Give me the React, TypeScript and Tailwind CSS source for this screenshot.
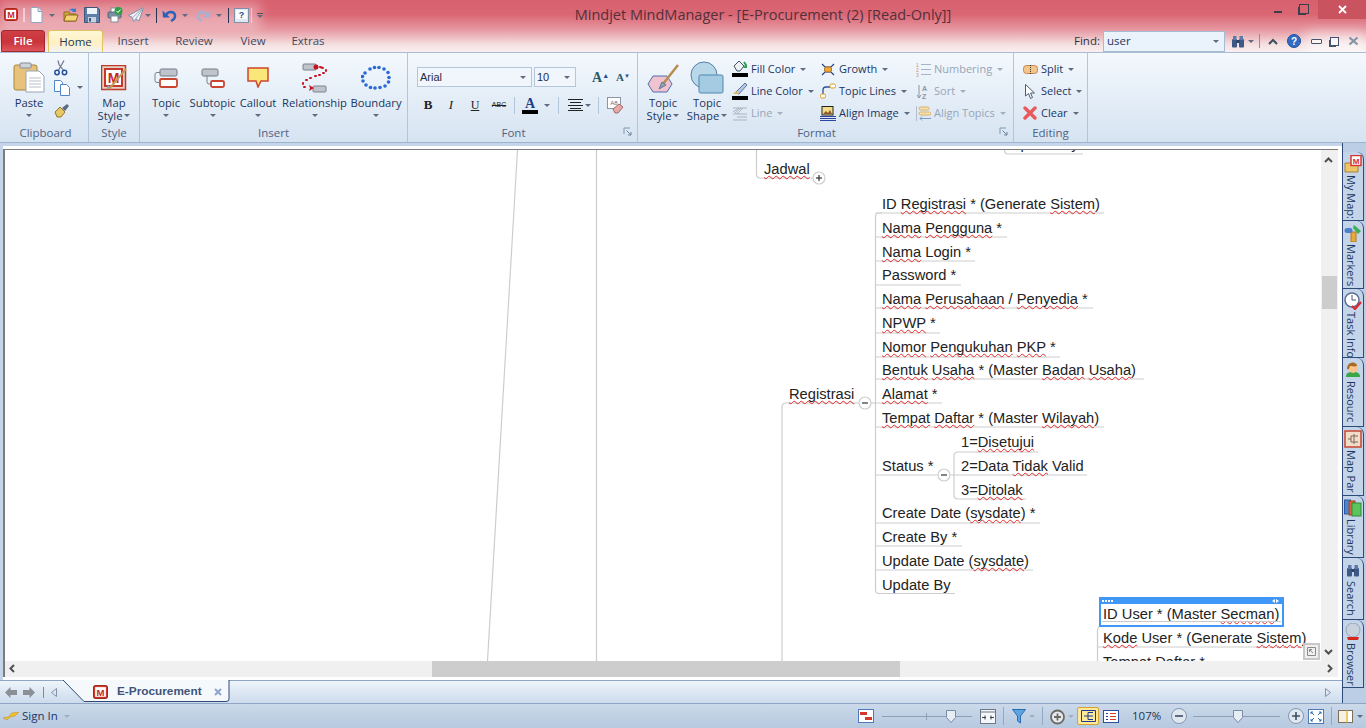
import React from 'react';

const Caret = ({ light = false, cls = '' }: { light?: boolean; cls?: string }) => (
  <span className={`inline-block h-0 w-0 shrink-0 border-x-[3px] border-t-[3px] border-x-transparent ${light ? 'border-t-[#a3afc0]' : 'border-t-[#5d6b80]'} ${cls}`} />
);

const Launcher = ({ cls }: { cls: string }) => (
  <svg width="9" height="9" viewBox="0 0 9 9" className={`absolute ${cls}`}>
    <path d="M1 1h6M1 1v6" stroke="#8496ad" fill="none" />
    <path d="M3.5 3.500L8 8M8 5v3H5" stroke="#71839b" fill="none" />
  </svg>
);

/* ---- small app icons ---- */
const MLogo = ({ size = 14 }: { size?: number }) => (
  <svg width={size} height={size} viewBox="0 0 14 14">
    <rect x="0.500" y="0.500" width="13" height="12" rx="2" fill="#d8382c" stroke="#9e2a20" />
    <rect x="2" y="2" width="10" height="9" fill="#fff" />
    <text x="7" y="10" textAnchor="middle" fontSize="9" fontWeight="700" fontFamily="Liberation Sans" fill="#c8281e">M</text>
  </svg>
);
const NewDoc = () => (
  <svg width="13" height="16" viewBox="0 0 13 16"><path d="M1 .5h7l4 4v11H1z" fill="#fff" stroke="#8ea5c4" /><path d="M8 .5v4h4" fill="#dbe6f3" stroke="#8ea5c4" /></svg>
);
const OpenIcon = () => (
  <svg width="16" height="16" viewBox="0 0 16 16"><path d="M1 5h5l1 2h6v7H1z" fill="#d6a93f" stroke="#8c6a1f" /><path d="M1 14l2-6h12l-2 6z" fill="#f2d477" stroke="#8c6a1f" /><path d="M6 4c1-3 4-3 6-2l1-1v4h-4l1-1c-1-1-3-1-4 0z" fill="#2f7fd6" /></svg>
);
const SaveIcon = () => (
  <svg width="16" height="16" viewBox="0 0 16 16"><path d="M.5.500h13l2 2v13H.5z" fill="#5d7ea6" stroke="#3d5678" /><rect x="3" y="1" width="10" height="6" fill="#eef3f9" /><rect x="4" y="10" width="8" height="5.500" fill="#c6d2e0" /><rect x="5" y="11" width="2" height="3.500" fill="#3d5678" /></svg>
);
const PrintIcon = () => (
  <svg width="16" height="16" viewBox="0 0 16 16"><rect x="4" y="1" width="7" height="5" fill="#fff" stroke="#7e8b9c" /><rect x="1" y="5" width="13" height="6" rx="1" fill="#7d8ea4" stroke="#566477" /><rect x="4" y="9" width="7" height="6" fill="#fff" stroke="#7e8b9c" /><circle cx="11.500" cy="4" r="4" fill="#2f9e44" /><path d="M9.500 4l1.500 1.500 2.500-3" stroke="#fff" fill="none" /></svg>
);
const SendIcon = () => (
  <svg width="16" height="16" viewBox="0 0 16 16"><path d="M15.500.500L.5 8.500l4 2 1 4.500 2.500-3 3 2z" fill="#eef2f7" stroke="#7f8fa5" /><path d="M15.500.500L4.500 10.500M15.500.500L5.500 15" stroke="#9aa8ba" fill="none" /></svg>
);
const UndoIcon = ({ faded = false }: { faded?: boolean }) => (
  <svg width="15" height="13" viewBox="0 0 15 13" style={{ transform: faded ? 'scaleX(-1)' : undefined }}><path d="M4 6c2-4 8-4 9 0 .5 3-2 5-4 6" stroke={faded ? '#a5b2d2' : '#2a62b8'} strokeWidth="2.400" fill="none" /><path d="M0.500 1.500l.5 7h7z" fill={faded ? '#a5b2d2' : '#2a62b8'} /></svg>
);
const HelpBook = () => (
  <svg width="15" height="15" viewBox="0 0 15 15"><rect x=".5" y=".5" width="14" height="14" fill="#dfe7f1" stroke="#7f90a8" /><rect x="2" y="2" width="11" height="9" fill="#f8fafc" /><text x="7.500" y="10" textAnchor="middle" fontSize="9" fontWeight="700" fontFamily="Liberation Sans" fill="#2c4f88">?</text></svg>
);
const Binoculars = ({ dark = true }: { dark?: boolean }) => (
  <svg width="14" height="13" viewBox="0 0 14 13"><rect x="1" y="4" width="5" height="8.500" rx="1" fill={dark ? '#3d5a86' : '#4a5f80'} /><rect x="8" y="4" width="5" height="8.500" rx="1" fill={dark ? '#3d5a86' : '#4a5f80'} /><rect x="2" y="1" width="3.500" height="4" fill="#5d7aa6" /><rect x="8.500" y="1" width="3.500" height="4" fill="#5d7aa6" /><rect x="5.500" y="5" width="3" height="3" fill="#2c4468" /></svg>
);
const PasteIcon = () => (
  <svg width="32" height="31" viewBox="0 0 32 31"><rect x="1" y="3" width="23" height="25" rx="2" fill="#e6c27a" stroke="#a8843f" /><rect x="7" y="1" width="11" height="5" rx="1" fill="#cfd4da" stroke="#838a94" /><path d="M13 9h13l5 5v16H13z" fill="#fff" stroke="#9aa4b2" /><path d="M16 16h12M16 19h12M16 22h12M16 25h12" stroke="#b8bfca" /></svg>
);
const ScissorsIcon = () => (
  <svg width="14" height="16" viewBox="0 0 14 16"><path d="M10 .5L4 11M4 .5l1 4 5 6.500" stroke="#6b7788" strokeWidth="1.200" fill="none" /><circle cx="3" cy="12.500" r="2.200" fill="none" stroke="#254f9e" strokeWidth="1.500" /><circle cx="10.500" cy="12.500" r="2.200" fill="none" stroke="#254f9e" strokeWidth="1.500" /></svg>
);
const CopyIcon = () => (
  <svg width="17" height="16" viewBox="0 0 17 16"><path d="M.5.500h6l2 2v9h-8z" fill="#fff" stroke="#5286cc" /><path d="M6.500 4.500h6l3 3v8h-9z" fill="#fff" stroke="#5286cc" /></svg>
);
const BrushIcon = () => (
  <svg width="16" height="15" viewBox="0 0 16 15"><path d="M1 9l5-5 5 5-4 5H3z" fill="#e8c766" stroke="#94762c" /><path d="M8 5l5-4 2 2-4 5z" fill="#5d6b80" /></svg>
);
const MapStyleIcon = () => (
  <svg width="26" height="26" viewBox="0 0 26 26"><rect x=".5" y=".5" width="24" height="24" fill="#e3d4c7" stroke="#c0392b" strokeWidth="1.500" /><rect x="3" y="3" width="19" height="19" fill="#c8372b" /><rect x="5" y="5" width="15" height="15" fill="#fff" /><text x="12.500" y="17.500" textAnchor="middle" fontSize="14" fontWeight="700" fontFamily="Liberation Sans" fill="#c8281e">M</text><path d="M8 24L25 4" stroke="#c09a57" strokeWidth="2" /><path d="M5 25l4-3-2-2z" fill="#8fa3bc" /></svg>
);
const TopicIcon = () => (
  <svg width="24" height="20" viewBox="0 0 24 20"><rect x="6" y="1" width="17" height="7" rx="1.500" fill="#bfc4cc" stroke="#707883" /><rect x="6" y="11" width="17" height="8" rx="1.500" fill="#fff" stroke="#c8452f" strokeWidth="1.800" /><path d="M6 4.500H3Q1 4.500 1 6.500v6q0 2 2 2h3" stroke="#7a818b" fill="none" /></svg>
);
const SubtopicIcon = () => (
  <svg width="24" height="20" viewBox="0 0 24 20"><rect x="1" y="1" width="16" height="7" rx="1.500" fill="#bfc4cc" stroke="#707883" /><rect x="10" y="13" width="13" height="6" rx="1.500" fill="#fff" stroke="#c8452f" strokeWidth="1.800" /><path d="M6 8v6q0 2 2 2h2" stroke="#7a818b" fill="none" /></svg>
);
const CalloutIcon = () => (
  <svg width="22" height="21" viewBox="0 0 22 21"><path d="M1 1h20v13h-7l-3 6-2-6H1z" fill="#fbe67a" stroke="#d0452d" strokeWidth="1.500" /></svg>
);
const RelationshipIcon = () => (
  <svg width="26" height="30" viewBox="0 0 26 30">
    <rect x="1" y="1" width="13" height="6" rx="1" fill="#bfc4cc" stroke="#7a818b" /><rect x="11" y="23" width="13" height="6" rx="1" fill="#bfc4cc" stroke="#7a818b" />
    <circle cx="14" cy="4" r="2.500" fill="#c8141e" />
    <path d="M18 4l3 1M24 7v1M21 10h1M17 12h1M13 13h1M8 15h1M4 17h1M1 20v1M2 24h1" stroke="#c8141e" strokeWidth="2" strokeLinecap="round" />
    <path d="M7 22l5 3-5 3 1-3z" fill="#c8141e" />
  </svg>
);
const BoundaryIcon = () => (
  <svg width="30" height="26" viewBox="0 0 30 26" fill="#2a68d6">
    {[[4,8],[1.500,11.500],[2,16],[5,20],[9.500,22.500],[14,23],[19,22.500],[24,21],[27.500,17],[28,12.500],[27,7.500],[23,4],[18,2.500],[13.500,2.500],[9,4]].map(([x, y], i) => (
      <circle key={i} cx={x} cy={y} r="1.800" />
    ))}
  </svg>
);
const ClearFmtIcon = () => (
  <svg width="17" height="17" viewBox="0 0 17 17"><rect x=".5" y=".5" width="13" height="11" fill="#fff" stroke="#8a95a5" /><text x="7" y="8" textAnchor="middle" fontSize="6" fontFamily="Liberation Sans" fill="#5a6b85">A8</text><path d="M6 12l6-5 4 3-5 6H8z" fill="#e8a9a9" stroke="#a16a6a" /></svg>
);
const TopicStyleIcon = () => (
  <svg width="32" height="30" viewBox="0 0 32 30"><path d="M1 21l5-8h14l5 8-5 8H6z" fill="#efc3cf" stroke="#4f6fb0" /><path d="M16 21L31 2" stroke="#b98d4e" strokeWidth="2.500" /><path d="M12 26l3-7 4 3z" fill="#8ea3bd" stroke="#66778f" /></svg>
);
const TopicShapeIcon = () => (
  <svg width="34" height="33" viewBox="0 0 34 33"><circle cx="14" cy="14" r="13" fill="#b8d7e8" stroke="#5a7ea8" /><rect x="9" y="14" width="24" height="18" rx="1.500" fill="#a5cbe2" stroke="#4f86b0" /></svg>
);
const FillColorIcon = () => (
  <svg width="16" height="18" viewBox="0 0 16 18"><path d="M2 6l5-5 5 5-4 5H5z" fill="#eef2f7" stroke="#3f4d60" /><path d="M12 2l2 3-1 2h2" stroke="#2aa052" strokeWidth="2" fill="none" /><rect x="0" y="13" width="16" height="4" fill="#000" /></svg>
);
const LineColorIcon = () => (
  <svg width="16" height="18" viewBox="0 0 16 18"><path d="M3 11L13 1l2 2-8 9z" fill="#b9c8dc" stroke="#5577a8" /><path d="M1 12l3-3 3 3z" fill="#e3b95e" /><rect x="0" y="14" width="16" height="4" fill="#000" /></svg>
);
const LineIcon = () => (
  <svg width="16" height="15" viewBox="0 0 16 15" stroke="#a8b3c2" fill="none"><path d="M1 2h14M1 6l6-4M3 7l6-5M5 8l6-6M1 8h14M5 11h10M1 14h14" /></svg>
);
const GrowthIcon = () => (
  <svg width="14" height="13" viewBox="0 0 14 13"><path d="M1 1l3 3h6l3-3M1 12l3-3h6l3 3" stroke="#26408a" fill="none" strokeWidth="1.200" /><rect x="3.500" y="4" width="7" height="5" rx="2" fill="#f0a93c" stroke="#b07016" /></svg>
);
const TopicLinesIcon = () => (
  <svg width="16" height="16" viewBox="0 0 16 16"><path d="M3 12V7q0-3 3-3h4" stroke="#2b4f9a" fill="none" strokeWidth="1.300" /><rect x="10" y="1" width="5.500" height="4" rx="1.500" fill="#fff" stroke="#e39a1e" /><rect x="0.500" y="11" width="5" height="4" rx="1.500" fill="#fff" stroke="#e39a1e" /></svg>
);
const AlignImageIcon = () => (
  <svg width="16" height="15" viewBox="0 0 16 15"><rect x="2" y="0.500" width="11" height="8.500" fill="#f4dc8a" stroke="#222" /><path d="M3 8l3-3 2 2 2-3 2 4z" fill="#8c5a26" /><path d="M0 10.500h16M0 12.500h16M0 14.500h16" stroke="#2a45a0" /></svg>
);
const NumberingIcon = () => (
  <svg width="15" height="15" viewBox="0 0 15 15"><text x="0" y="5" fontSize="5" fontFamily="Liberation Sans" fill="#c8926a">1</text><text x="0" y="10" fontSize="5" fontFamily="Liberation Sans" fill="#c8926a">2</text><text x="0" y="15" fontSize="5" fontFamily="Liberation Sans" fill="#c8926a">3</text><path d="M5 2.500h10M5 7.500h10M5 12.500h10" stroke="#a5b4c8" strokeWidth="1.200" /></svg>
);
const SortIcon = () => (
  <svg width="15" height="15" viewBox="0 0 15 15"><path d="M3 1v13M1 11l2 3 2-3" stroke="#8c96a3" fill="none" /><text x="6" y="7" fontSize="7" fontWeight="700" fontFamily="Liberation Sans" fill="#8c96a3">A</text><text x="6" y="14.500" fontSize="7" fontWeight="700" fontFamily="Liberation Sans" fill="#8c96a3">Z</text></svg>
);
const AlignTopicsIcon = () => (
  <svg width="15" height="15" viewBox="0 0 15 15"><path d="M.5 0v15" stroke="#b2bccb" /><rect x="3" y="1" width="10" height="3" rx="1.500" fill="#f4e0b0" stroke="#d8b26c" /><rect x="3" y="6" width="12" height="3" rx="1.500" fill="#f4e0b0" stroke="#d8b26c" /><path d="M4 12.500h11M4 12.500l2-2M4 12.500l2 2" stroke="#7d97c9" fill="none" /></svg>
);
const SplitIcon = () => (
  <svg width="15" height="9" viewBox="0 0 15 9"><rect x=".5" y=".5" width="14" height="8" rx="3" fill="#f4c58a" stroke="#c8864a" /><path d="M7.500 0v9" stroke="#333" strokeDasharray="1 1" /></svg>
);
const SelectIcon = () => (
  <svg width="11" height="15" viewBox="0 0 11 15"><path d="M.5.500v11.500l3-2.500 2 5 2-1-2-4.500h4z" fill="#fff" stroke="#4c5b70" /></svg>
);
const ClearIcon = () => (
  <svg width="14" height="14" viewBox="0 0 14 14"><path d="M2 2l10 10M12 2L2 12" stroke="#ea5a5a" strokeWidth="3.400" strokeLinecap="round" /></svg>
);

/* ---- ribbon parts ---- */
const Group = ({ label, cls, bodyCls = '', labelCls = '', children, launcher }: { label: string; cls: string; bodyCls?: string; labelCls?: string; children: React.ReactNode; launcher?: boolean }) => (
  <div className={`relative flex h-full shrink-0 flex-col border-r border-[#b3c5db] ${cls}`}>
    <div className={`flex min-h-0 flex-1 ${bodyCls}`}>{children}</div>
    <div className={`h-[18px] text-center text-[11.500px] leading-[18px] text-[#4f6482] ${labelCls}`}>{label}</div>
    {launcher && <Launcher cls="bottom-[6px] right-[5px]" />}
  </div>
);

const BigButton = ({ icon, lines, cls }: { icon: React.ReactNode; lines: string[]; cls: string }) => (
  <div className={`flex shrink-0 flex-col items-center pt-[8px] ${cls}`}>
    <div className="flex h-[33px] items-center justify-center">{icon}</div>
    <div className="mt-[2px] whitespace-nowrap text-center text-[11.250px] leading-[13px] text-[#1c3560]">{lines[0]}</div>
    {lines[1] ? (
      <div className="flex items-center gap-[2px] whitespace-nowrap text-[11.250px] leading-[13px] text-[#1c3560]">
        {lines[1]}
        <Caret />
      </div>
    ) : (
      <div className="flex h-[13px] items-center">
        <Caret />
      </div>
    )}
  </div>
);

const SmallButton = ({ icon, text, off = false }: { icon: React.ReactNode; text: string; off?: boolean }) => (
  <div className="flex h-[22px] items-center">
    <div className="flex w-[16px] shrink-0 items-center justify-center">{icon}</div>
    <span className={`ml-[3px] whitespace-nowrap text-[11px] ${off ? 'text-[#97a5b8]' : 'text-[#1c3560]'}`}>{text}</span>
    <Caret light={off} cls="ml-[5px]" />
  </div>
);

const Ribbon = () => (
  <div className="flex h-[90px] shrink-0 border-b border-[#9fb4cf] bg-[linear-gradient(180deg,#f3f8fd_0%,#e6eff8_45%,#d6e3f1_100%)]">
    <Group label="Clipboard" cls="w-[89px]" labelCls="pl-[3px]">
      <BigButton cls="ml-[4px] w-[50px]" icon={<PasteIcon />} lines={['Paste']} />
      <div className="flex flex-col">
        <div className="flex h-[23px] items-end"><ScissorsIcon /></div>
        <div className="flex h-[23px] items-center"><CopyIcon /><Caret cls="ml-[6px]" /></div>
        <div className="flex h-[22px] items-center"><BrushIcon /></div>
      </div>
    </Group>
    <Group label="Style" cls="w-[51px]">
      <BigButton cls="w-full" icon={<MapStyleIcon />} lines={['Map', 'Style']} />
    </Group>
    <Group label="Insert" cls="w-[268px]" bodyCls="pl-[3px]">
      <BigButton cls="w-[46px]" icon={<TopicIcon />} lines={['Topic']} />
      <BigButton cls="w-[47px]" icon={<SubtopicIcon />} lines={['Subtopic']} />
      <BigButton cls="w-[44px]" icon={<CalloutIcon />} lines={['Callout']} />
      <BigButton cls="w-[69px]" icon={<RelationshipIcon />} lines={['Relationship']} />
      <BigButton cls="w-[54px]" icon={<BoundaryIcon />} lines={['Boundary']} />
    </Group>
    <Group label="Font" cls="w-[230px]" bodyCls="pl-[9px]" labelCls="pr-[18px]" launcher>
      <div className="flex flex-col pt-[14px]">
        <div className="flex h-[20px] items-center">
          <div className="flex h-[20px] w-[115px] items-center border border-[#b4c6dc] bg-[#f0f6fc] pl-[2px] pr-[5px] font-['Liberation_Sans',sans-serif] text-[11px] text-[#1c2c44]">
            Arial<Caret cls="ml-auto" />
          </div>
          <div className="ml-[2px] flex h-[20px] w-[42px] items-center border border-[#b4c6dc] bg-[#f0f6fc] pl-[2px] pr-[5px] font-['Liberation_Sans',sans-serif] text-[11px] text-[#1c2c44]">
            10<Caret cls="ml-auto" />
          </div>
          <span className="ml-[16px] font-['Liberation_Serif',serif] text-[14px] font-bold text-[#2a5a6a]">A<sup className="text-[7px] text-[#2a4f9a]">▲</sup></span>
          <span className="ml-[7px] font-['Liberation_Serif',serif] text-[11px] font-bold text-[#2a5a6a]">A<sup className="text-[6px] text-[#2a4f9a]">▼</sup></span>
        </div>
        <div className="mt-[7px] flex h-[22px] items-center font-['Liberation_Serif',serif] text-[#222]">
          <span className="ml-[3px] w-[16px] text-center text-[13px] font-bold">B</span>
          <span className="ml-[7px] w-[16px] text-center text-[13px] italic">I</span>
          <span className="ml-[8px] w-[16px] text-center text-[12px] underline">U</span>
          <span className="ml-[8px] w-[16px] text-center font-['Liberation_Sans',sans-serif] text-[7px] line-through">ABC</span>
          <span className="ml-[7px] h-[17px] w-px bg-[#b3c5db]" />
          <span className="ml-[7px] flex w-[16px] flex-col items-center text-[14px] font-bold leading-[13px] text-[#1d3f8a]">A<span className="h-[4px] w-[16px] bg-black" /></span>
          <Caret cls="ml-[6px]" />
          <span className="ml-[8px] h-[17px] w-px bg-[#b3c5db]" />
          <svg width="15" height="12" viewBox="0 0 15 12" className="ml-[9px]" stroke="#222"><path d="M0 .5h15M2 3.500h11M0 6.500h15M2 9.500h11M0 11.500h15" /></svg>
          <Caret cls="ml-[2px]" />
          <span className="ml-[7px] h-[17px] w-px bg-[#b3c5db]" />
          <span className="ml-[8px]"><ClearFmtIcon /></span>
        </div>
      </div>
    </Group>
    <Group label="Format" cls="w-[376px]" bodyCls="pl-[3px]" labelCls="pr-[18px]" launcher>
      <BigButton cls="w-[44px]" icon={<TopicStyleIcon />} lines={['Topic', 'Style']} />
      <BigButton cls="w-[44px]" icon={<TopicShapeIcon />} lines={['Topic', 'Shape']} />
      <div className="ml-[3px] flex w-[88px] shrink-0 flex-col pt-[5px]">
        <SmallButton icon={<FillColorIcon />} text="Fill Color" />
        <SmallButton icon={<LineColorIcon />} text="Line Color" />
        <SmallButton icon={<LineIcon />} text="Line" off />
      </div>
      <div className="flex w-[95px] shrink-0 flex-col pt-[5px]">
        <SmallButton icon={<GrowthIcon />} text="Growth" />
        <SmallButton icon={<TopicLinesIcon />} text="Topic Lines" />
        <SmallButton icon={<AlignImageIcon />} text="Align Image" />
      </div>
      <div className="flex flex-col pt-[5px]">
        <SmallButton icon={<NumberingIcon />} text="Numbering" off />
        <SmallButton icon={<SortIcon />} text="Sort" off />
        <SmallButton icon={<AlignTopicsIcon />} text="Align Topics" off />
      </div>
    </Group>
    <Group label="Editing" cls="w-[74px]" bodyCls="pl-[8px]">
      <div className="flex flex-col pt-[5px]">
        <SmallButton icon={<SplitIcon />} text="Split" />
        <SmallButton icon={<SelectIcon />} text="Select" />
        <SmallButton icon={<ClearIcon />} text="Clear" />
      </div>
    </Group>
  </div>
);

/* ---- map data, coordinates are page pixels ---- */
const nodes = [
  { t: '~Jadwal~', x: 764, y: 169 },
  { t: 'Update By', x: 1010, y: 144 },
  { t: '~Registrasi~', x: 789, y: 394 },
  { t: 'ID ~Registrasi~ * (Generate ~Sistem~)', x: 882, y: 204 },
  { t: '~Nama~ ~Pengguna~ *', x: 882, y: 228 },
  { t: '~Nama~ Login *', x: 882, y: 252 },
  { t: 'Password *', x: 882, y: 275 },
  { t: '~Nama~ ~Perusahaan~ / ~Penyedia~ *', x: 882, y: 299 },
  { t: '~NPWP~ *', x: 882, y: 323 },
  { t: '~Nomor~ ~Pengukuhan~ ~PKP~ *', x: 882, y: 347 },
  { t: '~Bentuk~ ~Usaha~ * (Master ~Badan~ ~Usaha~)', x: 882, y: 370 },
  { t: '~Alamat~ *', x: 882, y: 394 },
  { t: '~Tempat~ ~Daftar~ * (Master ~Wilayah~)', x: 882, y: 418 },
  { t: 'Status *', x: 882, y: 466 },
  { t: '1=~Disetujui~', x: 961, y: 442 },
  { t: '2=Data ~Tidak~ Valid', x: 961, y: 466 },
  { t: '3=~Ditolak~', x: 961, y: 490 },
  { t: 'Create Date (~sysdate~) *', x: 882, y: 513 },
  { t: 'Create By *', x: 882, y: 537 },
  { t: 'Update Date (~sysdate~)', x: 882, y: 561 },
  { t: 'Update By', x: 882, y: 585 },
  { t: 'ID User * (Master ~Secman~)', x: 1103, y: 614 },
  { t: '~Kode~ User * (Generate ~Sistem~)', x: 1103, y: 638 },
  { t: '~Tempat~ ~Daftar~ *', x: 1103, y: 662 },
];

const branchLines = [
  [237, 1007], [261, 975], [285, 961], [308, 1093], [333, 940], [357, 1060], [379, 1144], [403, 942], [427, 1104], [475, 938],
  [523, 1040], [546, 962], [570, 1033],
];

const NodeText = ({ t }: { t: string }) => (
  <>
    {t.split('~').map((part, i) =>
      i % 2 === 1 ? (
        <span key={i} className="underline decoration-[#e5282a] decoration-wavy decoration-1 underline-offset-1 [text-decoration-skip-ink:none]">{part}</span>
      ) : (
        <span key={i}>{part}</span>
      )
    )}
  </>
);

const Toggle = ({ cx, cy, plus = false }: { cx: number; cy: number; plus?: boolean }) => (
  <g>
    <circle cx={cx} cy={cy} r="6" fill="#fff" stroke="#cfcfcf" strokeWidth="1.200" />
    <path d={`M${cx - 3} ${cy}h6`} stroke="#333" strokeWidth="1.200" />
    {plus && <path d={`M${cx} ${cy - 3}v6`} stroke="#333" strokeWidth="1.200" />}
  </g>
);

const MapCanvas = () => (
  <div className="relative min-w-0 flex-1 overflow-hidden bg-white font-['Liberation_Sans',sans-serif] text-[14.700px] leading-[18px] text-[#222]">
    <svg className="absolute inset-0 h-full w-full" viewBox="5 150 1316 511" fill="none" stroke="#cdcdcd" strokeWidth="1.200">
      <path d="M517.500 150L487.500 661M596.500 150V661" />
      <path d="M756.500 150V174Q756.500 178 760.500 178H813" />
      <path d="M1004.500 150Q1004.500 154 1008 154H1083" />
      <path d="M860 403H786Q782 403 782 407V661" />
      <path d="M882 213H879Q875.500 213 875.500 217V590Q875.500 593.500 879 593.500H955" />
      <path d="M875.500 213H1104" />
      {branchLines.map(([y, end]) => (
        <path key={y} d={`M876 ${y}H${end}`} />
      ))}
      <path d="M871 403H876" />
      <path d="M1038 452H958Q954 452 954 456V495Q954 499 958 499H1026" />
      <path d="M950 475H1087" />
      <path d="M1104 647H1097.500M1097.500 661V631Q1097.500 626 1101 626M1097.500 647H1310" />
      <Toggle cx={819} cy={178} plus />
      <Toggle cx={865} cy={403} />
      <Toggle cx={944} cy={475} />
    </svg>
    {nodes.map((n, i) => (
      <span key={i} className="absolute whitespace-nowrap" style={{ left: n.x - 5, top: n.y - 159 }}>
        <NodeText t={n.t} />
      </span>
    ))}
    {/* selected topic frame */}
    <div className="absolute left-[1094px] top-[447px] h-[30px] w-[185px] rounded-[1px] border-2 border-t-0 border-[#3f97f7]">
      <div className="-mx-[2px] flex h-[7px] items-center justify-between bg-[#3f97f7] px-[3px]">
        <span className="flex gap-[1px]">
          <span className="h-[2px] w-[2px] bg-white" /><span className="h-[2px] w-[2px] bg-white" /><span className="h-[2px] w-[2px] bg-white" /><span className="h-[2px] w-[2px] bg-white" />
        </span>
        <span className="mr-[2px] flex gap-[1px]">
          <span className="h-0 w-0 border-y-[2.500px] border-r-[3px] border-y-transparent border-r-white" />
          <span className="h-0 w-0 border-y-[2.500px] border-l-[3px] border-y-transparent border-l-white" />
        </span>
      </div>
      <div className="mx-[1px] mt-[17px] h-px bg-[#c9c9c9]" />
    </div>
    {/* map overview toggle */}
    <div className="absolute left-[1298px] top-[493px] flex h-[17px] w-[17px] items-center justify-center border-2 border-[#c8c8c8] bg-[#efefef]">
      <svg width="9" height="9" viewBox="0 0 9 9" fill="none" stroke="#8a8a8a"><path d="M.5.500h8v8h-8zM6 6L2.500 2.500M2.500 5V2.500H5" /></svg>
    </div>
  </div>
);

const Chevron = ({ d, cls }: { d: string; cls: string }) => (
  <svg width="9" height="9" viewBox="0 0 9 9" className={`absolute ${cls}`}><path d={d} fill="none" stroke="#505050" strokeWidth="2" /></svg>
);

/* ---- dock on the right ---- */
const DockTab = ({ icon, label, cls }: { icon: React.ReactNode; label: string; cls: string }) => (
  <div className={`flex w-[21px] shrink-0 flex-col items-center overflow-hidden rounded-tr-[7px] border-b border-r border-[#2d4a78] bg-[#c4d5ea] pt-[3px] ${cls}`}>
    <div className="flex h-[18px] w-[18px] shrink-0 items-center justify-center">{icon}</div>
    <span className="mr-[3px] mt-[2px] w-[15px] whitespace-nowrap text-[11px] leading-[15px] text-[#1c3560] [writing-mode:vertical-rl]">{label}</span>
  </div>
);

const dockTabs = [
  { label: 'My Map:', cls: 'h-[69px]', icon: <svg width="18" height="18" viewBox="0 0 18 18"><path d="M1 8h6l1 2h6v7H1z" fill="#edc668" stroke="#a5803a" /><rect x="7" y="0.500" width="10" height="10" fill="#fff" stroke="#d8382c" strokeWidth="1.500" /><text x="12" y="8.500" textAnchor="middle" fontSize="8" fontWeight="700" fontFamily="Liberation Sans" fill="#d8281e">M</text></svg> },
  { label: 'Markers', cls: 'h-[68px]', icon: <svg width="18" height="18" viewBox="0 0 18 18"><rect x="7" y="8" width="5" height="10" fill="#e9a83c" stroke="#b57a1e" /><rect x="0.500" y="4" width="8" height="5" rx="2.500" fill="#4a80cc" /><path d="M10 1l7 6-3 3-5-6z" fill="#3fae55" /></svg> },
  { label: 'Task Info', cls: 'h-[69px]', icon: <svg width="18" height="18" viewBox="0 0 18 18"><circle cx="8" cy="8" r="7" fill="#fff" stroke="#5a6f93" strokeWidth="1.500" /><path d="M8 3v5h4" stroke="#44587a" fill="none" /><path d="M8 14l3 3 6-7" stroke="#e0282a" strokeWidth="2.200" fill="none" /></svg> },
  { label: 'Resourc', cls: 'h-[69px]', icon: <svg width="18" height="18" viewBox="0 0 18 18"><path d="M2 16c0-5 4-5 7-5s7 0 7 5z" fill="#3aa648" /><circle cx="9" cy="7" r="5" fill="#f7c58c" /><path d="M3 8c0-8 10-8 10-3-3 1-6 0-7 0-1 1 0 4-3 3z" fill="#a86a26" /></svg> },
  { label: 'Map Par', cls: 'h-[69px]', icon: <svg width="18" height="18" viewBox="0 0 18 18"><rect x="1" y="1" width="16" height="16" fill="#f0dcc8" stroke="#c8452f" strokeWidth="1.500" /><path d="M4 9h3M7 6h7M7 12h7M7 6v6M10 4v10" stroke="#7a6a58" fill="none" /></svg> },
  { label: 'Library', cls: 'h-[62px]', icon: <svg width="18" height="18" viewBox="0 0 18 18"><rect x="0.500" y="1" width="6" height="14" fill="#4a86d8" stroke="#2a5a9e" /><rect x="5" y="2" width="6" height="14" fill="#d8643c" stroke="#a0431e" /><rect x="8" y="4" width="9" height="13" fill="#5cc45c" stroke="#2f8a36" /></svg> },
  { label: 'Search', cls: 'h-[62px]', icon: <Binoculars /> },
  { label: 'Browser', cls: 'h-[68px]', icon: <svg width="16" height="18" viewBox="0 0 16 18"><circle cx="8" cy="7" r="7" fill="#c8d2dc" stroke="#98a4b2" /><path d="M2 14h12l-1 3H3z" fill="#d8281e" /></svg> },
];

/* ---- status bar bits ---- */
const Slider = ({ cls, thumb, tick }: { cls: string; thumb: string; tick?: string }) => (
  <div className={`relative h-[9px] ${cls}`}>
    <div className="absolute left-0 right-0 top-[4px] h-px bg-[#8e9fb6]" />
    {tick && <div className={`absolute top-[1px] h-[7px] w-px bg-[#8e9fb6] ${tick}`} />}
    <svg width="10" height="13" viewBox="0 0 10 13" className={`absolute -top-[2px] ${thumb}`}><path d="M.5.500h9v7l-4.500 5-4.500-5z" fill="#e6edf5" stroke="#7b8ba2" /></svg>
  </div>
);

const StatusSep = ({ cls }: { cls: string }) => <span className={`h-[18px] w-px shrink-0 bg-[#94a8c2] ${cls}`} />;

const RoundBtn = ({ plus = false, cls }: { plus?: boolean; cls: string }) => (
  <svg width="16" height="16" viewBox="0 0 16 16" className={cls}><circle cx="8" cy="8" r="7.500" fill="#dfe7f1" stroke="#8597b0" /><path d={plus ? 'M4 8h8M8 4v8' : 'M4 8h8'} stroke="#3e4d62" strokeWidth="1.600" /></svg>
);

const App: React.FC = () => {
  return (
    <div className="flex h-[728px] w-[1366px] flex-col overflow-hidden bg-[#c4d5ea] font-['Open_Sans',sans-serif]">
      {/* Title bar and tabs */}
      <div className="relative h-[53px] shrink-0 overflow-hidden border-b border-[#a9bdd6] bg-[linear-gradient(180deg,#d8606e_0%,#da6674_28%,#e79aa3_58%,#f4dfe0_85%,#f9eff0_100%)]">
        <div className="absolute left-0 top-[3px] h-[27px] w-[260px] bg-white/35 blur-[6px]" />
        <div className="absolute right-0 top-[32px] h-[30px] w-[60px] bg-white/50 blur-[6px]" />
        <div className="relative flex h-[30px] items-center">
          <div className="flex w-[264px] shrink-0 items-center">
            <span className="ml-[4px]"><MLogo /></span>
            <span className="ml-[5px] h-[14px] w-[2px] bg-white/50" />
            <span className="ml-[5px]"><NewDoc /></span>
            <Caret cls="ml-[6px]" />
            <span className="ml-[8px]"><OpenIcon /></span>
            <span className="ml-[5px]"><SaveIcon /></span>
            <span className="ml-[7px]"><PrintIcon /></span>
            <span className="ml-[5px]"><SendIcon /></span>
            <Caret cls="ml-[1px]" />
            <span className="ml-[5px] h-[15px] w-px bg-[#24344f]" />
            <span className="ml-[5px]"><UndoIcon /></span>
            <Caret cls="ml-[5px]" />
            <span className="ml-[8px]"><UndoIcon faded /></span>
            <Caret cls="ml-[5px]" />
            <span className="ml-[6px] h-[15px] w-px bg-[#24344f]" />
            <span className="ml-[5px]"><HelpBook /></span>
            <span className="ml-[2px] h-[15px] w-px bg-white/50" />
            <span className="ml-[5px] flex flex-col items-center gap-[1px]"><span className="h-px w-[6px] bg-[#4a4f5a]" /><Caret /></span>
          </div>
          <div className="flex-1 pr-[8px] text-center text-[14.500px] text-[#54303a]">Mindjet MindManager - [E-Procurement (2) [Read-Only]]</div>
          <div className="flex h-full w-[96px] shrink-0 items-start">
            <span className="ml-[4px] mt-[11px] h-[2px] w-[8px] bg-[#3a3f48]" />
            <span className="ml-[17px] mt-[4px] block h-[10px] w-[10px] border border-[#3a3f48] shadow-[-2px_2px_0_-1px_#3a3f48]" />
            <div className="ml-[9px] flex h-[19px] flex-1 items-center justify-center bg-[#c9545f]">
              <svg width="9" height="9" viewBox="0 0 9 9"><path d="M1 1l7 7M8 1L1 8" stroke="#fff" strokeWidth="1.800" /></svg>
            </div>
          </div>
        </div>
        <div className="relative flex h-[22px] items-end text-[11.500px] text-[#3d4a5e]">
          <div className="ml-[1px] flex h-[22px] w-[44px] items-center justify-center rounded-t-[3px] border border-[#9e2a2f] bg-[linear-gradient(180deg,#cf3f45_0%,#c8343a_55%,#e0555c_100%)] font-semibold text-white">File</div>
          <div className="ml-[3px] flex h-[22px] w-[55px] items-center justify-center rounded-t-[3px] border border-b-0 border-[#e2c35d] bg-[linear-gradient(180deg,#fff7d8_0%,#fdf0c2_55%,#f1f4f4_100%)] text-[#22385f]">Home</div>
          <div className="ml-[2px] flex h-[22px] w-[56px] items-center justify-center">Insert</div>
          <div className="flex h-[22px] w-[66px] items-center justify-center">Review</div>
          <div className="flex h-[22px] w-[52px] items-center justify-center">View</div>
          <div className="flex h-[22px] w-[58px] items-center justify-center">Extras</div>
          <div className="ml-auto flex h-[22px] items-center">
            <span className="w-[29px] text-[#2e333b]">Find:</span>
            <div className="flex h-[21px] w-[122px] items-center border border-[#a7bbd3] bg-[#eaf3fc] pl-[3px] pr-[5px] text-[#22385f]">
              user<Caret cls="ml-auto" />
            </div>
            <span className="ml-[6px]"><Binoculars /></span>
            <Caret cls="ml-[3px]" />
            <span className="ml-[5px] h-[14px] w-px bg-[#7f93ad]" />
            <svg width="10" height="7" viewBox="0 0 10 7" className="ml-[8px]"><path d="M1 6l4-4 4 4" fill="none" stroke="#3e4d62" strokeWidth="2" /></svg>
            <svg width="14" height="14" viewBox="0 0 14 14" className="ml-[9px]"><circle cx="7" cy="7" r="6.500" fill="#2f6cc8" stroke="#234f96" /><text x="7" y="10.500" textAnchor="middle" fontSize="10" fontWeight="700" fontFamily="Liberation Sans" fill="#fff">?</text></svg>
            <span className="ml-[10px] h-[5px] w-[11px] rounded-[1px] border border-[#44546c] bg-white/60" />
            <span className="ml-[8px] block h-[9px] w-[9px] border border-[#44546c] bg-white/60 shadow-[-2px_2px_0_-1px_#44546c]" />
            <svg width="11" height="10" viewBox="0 0 11 10" className="ml-[9px] mr-[7px]"><path d="M1.500 1.500l8 7M9.500 1.500l-8 7" stroke="#8392a6" strokeWidth="2.200" /></svg>
          </div>
        </div>
      </div>

      <Ribbon />

      {/* Document area with dock */}
      <div className="flex h-[560px] shrink-0">
        <div className="flex w-[1342px] shrink-0 flex-col pl-[3px] pt-[3px]">
          <div className="flex min-h-0 flex-1 flex-col bg-white pb-[3px] pr-[4px] pt-[3px]">
            <div className="flex min-h-0 flex-1 flex-col border-l-2 border-t border-[#7c7c7c]">
              <div className="flex min-h-0 flex-1">
                <MapCanvas />
                <div className="relative w-[17px] shrink-0 bg-[#f0f0f0]">
                  <div className="ml-px mt-[126px] h-[33px] w-[15px] bg-[#cdcdcd]" />
                  <Chevron d="M1 6l3.500-3.500L8 6" cls="left-[3px] top-[6px]" />
                  <Chevron d="M1 3l3.500 3.500L8 3" cls="bottom-[5px] left-[3px]" />
                </div>
              </div>
              <div className="relative h-[16px] shrink-0 bg-[#f0f0f0]">
                <div className="ml-[427px] h-[16px] w-[468px] bg-[#cdcdcd]" />
                <Chevron d="M6 1L2.500 4.500 6 8" cls="left-[3px] top-[3px]" />
                <Chevron d="M3 1l3.500 3.500L3 8" cls="right-[4px] top-[3px]" />
              </div>
            </div>
          </div>
          {/* Map tabs */}
          <div className="-ml-[3px] flex h-[23px] shrink-0 items-center border-t border-[#8ea5c3] bg-[linear-gradient(180deg,#eef4fb_0%,#cddbec_100%)]">
            <svg width="12" height="11" viewBox="0 0 12 11" className="ml-[5px]"><path d="M0 5.500L5.500 0v3H12v5H5.500v3z" fill="#8b8f96" /></svg>
            <svg width="12" height="11" viewBox="0 0 12 11" className="ml-[6px]"><path d="M12 5.500L6.500 0v3H0v5h6.500v3z" fill="#8b8f96" /></svg>
            <span className="ml-[8px] h-[11px] w-px bg-[#7b8a9e]" />
            <svg width="6" height="9" viewBox="0 0 6 9" className="ml-[7px]"><path d="M5.500.500L.5 4.500l5 4z" fill="none" stroke="#8593a6" /></svg>
            <div className="relative ml-[6px] flex h-[23px] w-[167px] shrink-0 items-center">
              <svg width="167" height="23" viewBox="0 0 167 23" className="absolute -top-px left-0"><path d="M0 0L21 21.500H163Q166 21.500 166 19V0" fill="#f6f9fc" stroke="#2d4a78" /></svg>
              <span className="relative ml-[30px]"><MLogo size={15} /></span>
              <span className="relative ml-[9px] font-['Liberation_Sans',sans-serif] text-[11.800px] font-bold text-[#3c5478]">E-Procurement</span>
              <svg width="8" height="8" viewBox="0 0 8 8" className="relative ml-[12px]"><path d="M1 1l6 6M7 1L1 7" stroke="#8ba6cf" strokeWidth="2" /></svg>
            </div>
            <svg width="6" height="9" viewBox="0 0 6 9" className="ml-auto mr-[11px]"><path d="M.5.500l5 4-5 4z" fill="none" stroke="#8593a6" /></svg>
          </div>
        </div>
        <div className="flex w-[24px] shrink-0 flex-col border-l border-[#2d4a78] bg-[#bccee6] pt-[9px]">
          {dockTabs.map(d => (
            <DockTab key={d.label} icon={d.icon} label={d.label} cls={d.cls} />
          ))}
        </div>
      </div>

      {/* Status bar */}
      <div className="flex h-[25px] shrink-0 items-center border-t border-[#8ea5c3] bg-[linear-gradient(180deg,#cbd9ea_0%,#b6c9e0_100%)] pr-[3px] text-[11.500px] text-[#1c3560]">
        <svg width="16" height="8" viewBox="0 0 16 8" className="ml-[3px]"><path d="M0 6l5-1 4-4 7-1-4 4-5 1-3 3z" fill="#efc12e" stroke="#b98a18" strokeWidth=".5" /></svg>
        <span className="ml-[3px]">Sign In</span>
        <Caret light cls="ml-[6px]" />
        <div className="ml-auto flex items-center">
          <svg width="16" height="14" viewBox="0 0 16 14"><rect x=".5" y=".5" width="15" height="13" fill="#fff" stroke="#4f79b8" /><rect x="2" y="3" width="7" height="3" fill="#d8382c" /><rect x="7" y="8" width="7" height="3" fill="#d8382c" /></svg>
          <Slider cls="ml-[8px] w-[90px]" thumb="left-[64px]" tick="left-[44px]" />
          <svg width="16" height="15" viewBox="0 0 16 15" className="ml-[8px]"><rect x=".5" y=".5" width="15" height="14" fill="#f3f6fa" stroke="#6d7785" /><path d="M0 3h16" stroke="#6d7785" /><path d="M2 8.500h4M10 8.500h4M5 6.500v4M11 6.500v4" stroke="#444" /></svg>
          <StatusSep cls="ml-[7px]" />
          <svg width="14" height="15" viewBox="0 0 14 15" className="ml-[8px]"><path d="M.5.500h13L8.500 7v7l-3-2V7z" fill="#5da5e0" stroke="#2b6cb0" /></svg>
          <Caret light cls="ml-[3px]" />
          <StatusSep cls="ml-[7px]" />
          <svg width="17" height="17" viewBox="0 0 17 17" className="ml-[6px]"><circle cx="8.500" cy="9" r="6.500" fill="#e5ebf3" stroke="#6e6a62" strokeWidth="1.800" /><path d="M5 9h7M8.500 5.500v7" stroke="#6e6a62" strokeWidth="1.800" /></svg>
          <Caret light cls="ml-[2px]" />
          <div className="ml-[3px] flex h-[18px] w-[22px] items-center justify-center rounded-[2px] border border-[#d8a032] bg-[#fde99a]">
            <svg width="15" height="12" viewBox="0 0 15 12" stroke="#1c3a8c" fill="none"><path d="M.5.500h14v11H.5zM3 6h9M7 2.500v7M7 2.500h5M7 9.500h5" /></svg>
          </div>
          <svg width="16" height="13" viewBox="0 0 16 13" className="ml-[4px]"><rect x=".5" y=".5" width="15" height="12" fill="#fff" stroke="#2b4f9a" /><path d="M3 3.500h2M3 6.500h2M3 9.500h2" stroke="#1c3a8c" /><path d="M7 3.500h6M7 6.500h6M7 9.500h6" stroke="#d8382c" /></svg>
          <span className="ml-[13px] w-[27px] whitespace-nowrap text-[#26364e]">107%</span>
          <RoundBtn cls="ml-[12px]" />
          <Slider cls="ml-[6px] w-[87px]" thumb="left-[40px]" />
          <RoundBtn plus cls="ml-[8px]" />
          <svg width="16" height="15" viewBox="0 0 16 15" className="ml-[4px]"><rect x=".5" y=".5" width="15" height="14" fill="#fff" stroke="#4f79b8" /><path d="M3 3l3 3M3 3h2M3 3v2M13 3l-3 3M13 3h-2M13 3v2M3 12l3-3M3 12h2M3 12v-2M13 12l-3-3M13 12h-2M13 12v-2" stroke="#2b6cb0" fill="none" /></svg>
          <StatusSep cls="ml-[7px]" />
          <svg width="15" height="13" viewBox="0 0 15 13" className="ml-[6px]"><rect x=".5" y=".5" width="14" height="12" fill="#f5f0e6" stroke="#7c6e58" /><rect x="9" y="1" width="5" height="11" fill="#fff" /><path d="M9 .5v12" stroke="#e3c13a" strokeWidth="1.500" /></svg>
          <Caret cls="ml-[4px]" />
        </div>
      </div>
    </div>
  );
};

export default App;
